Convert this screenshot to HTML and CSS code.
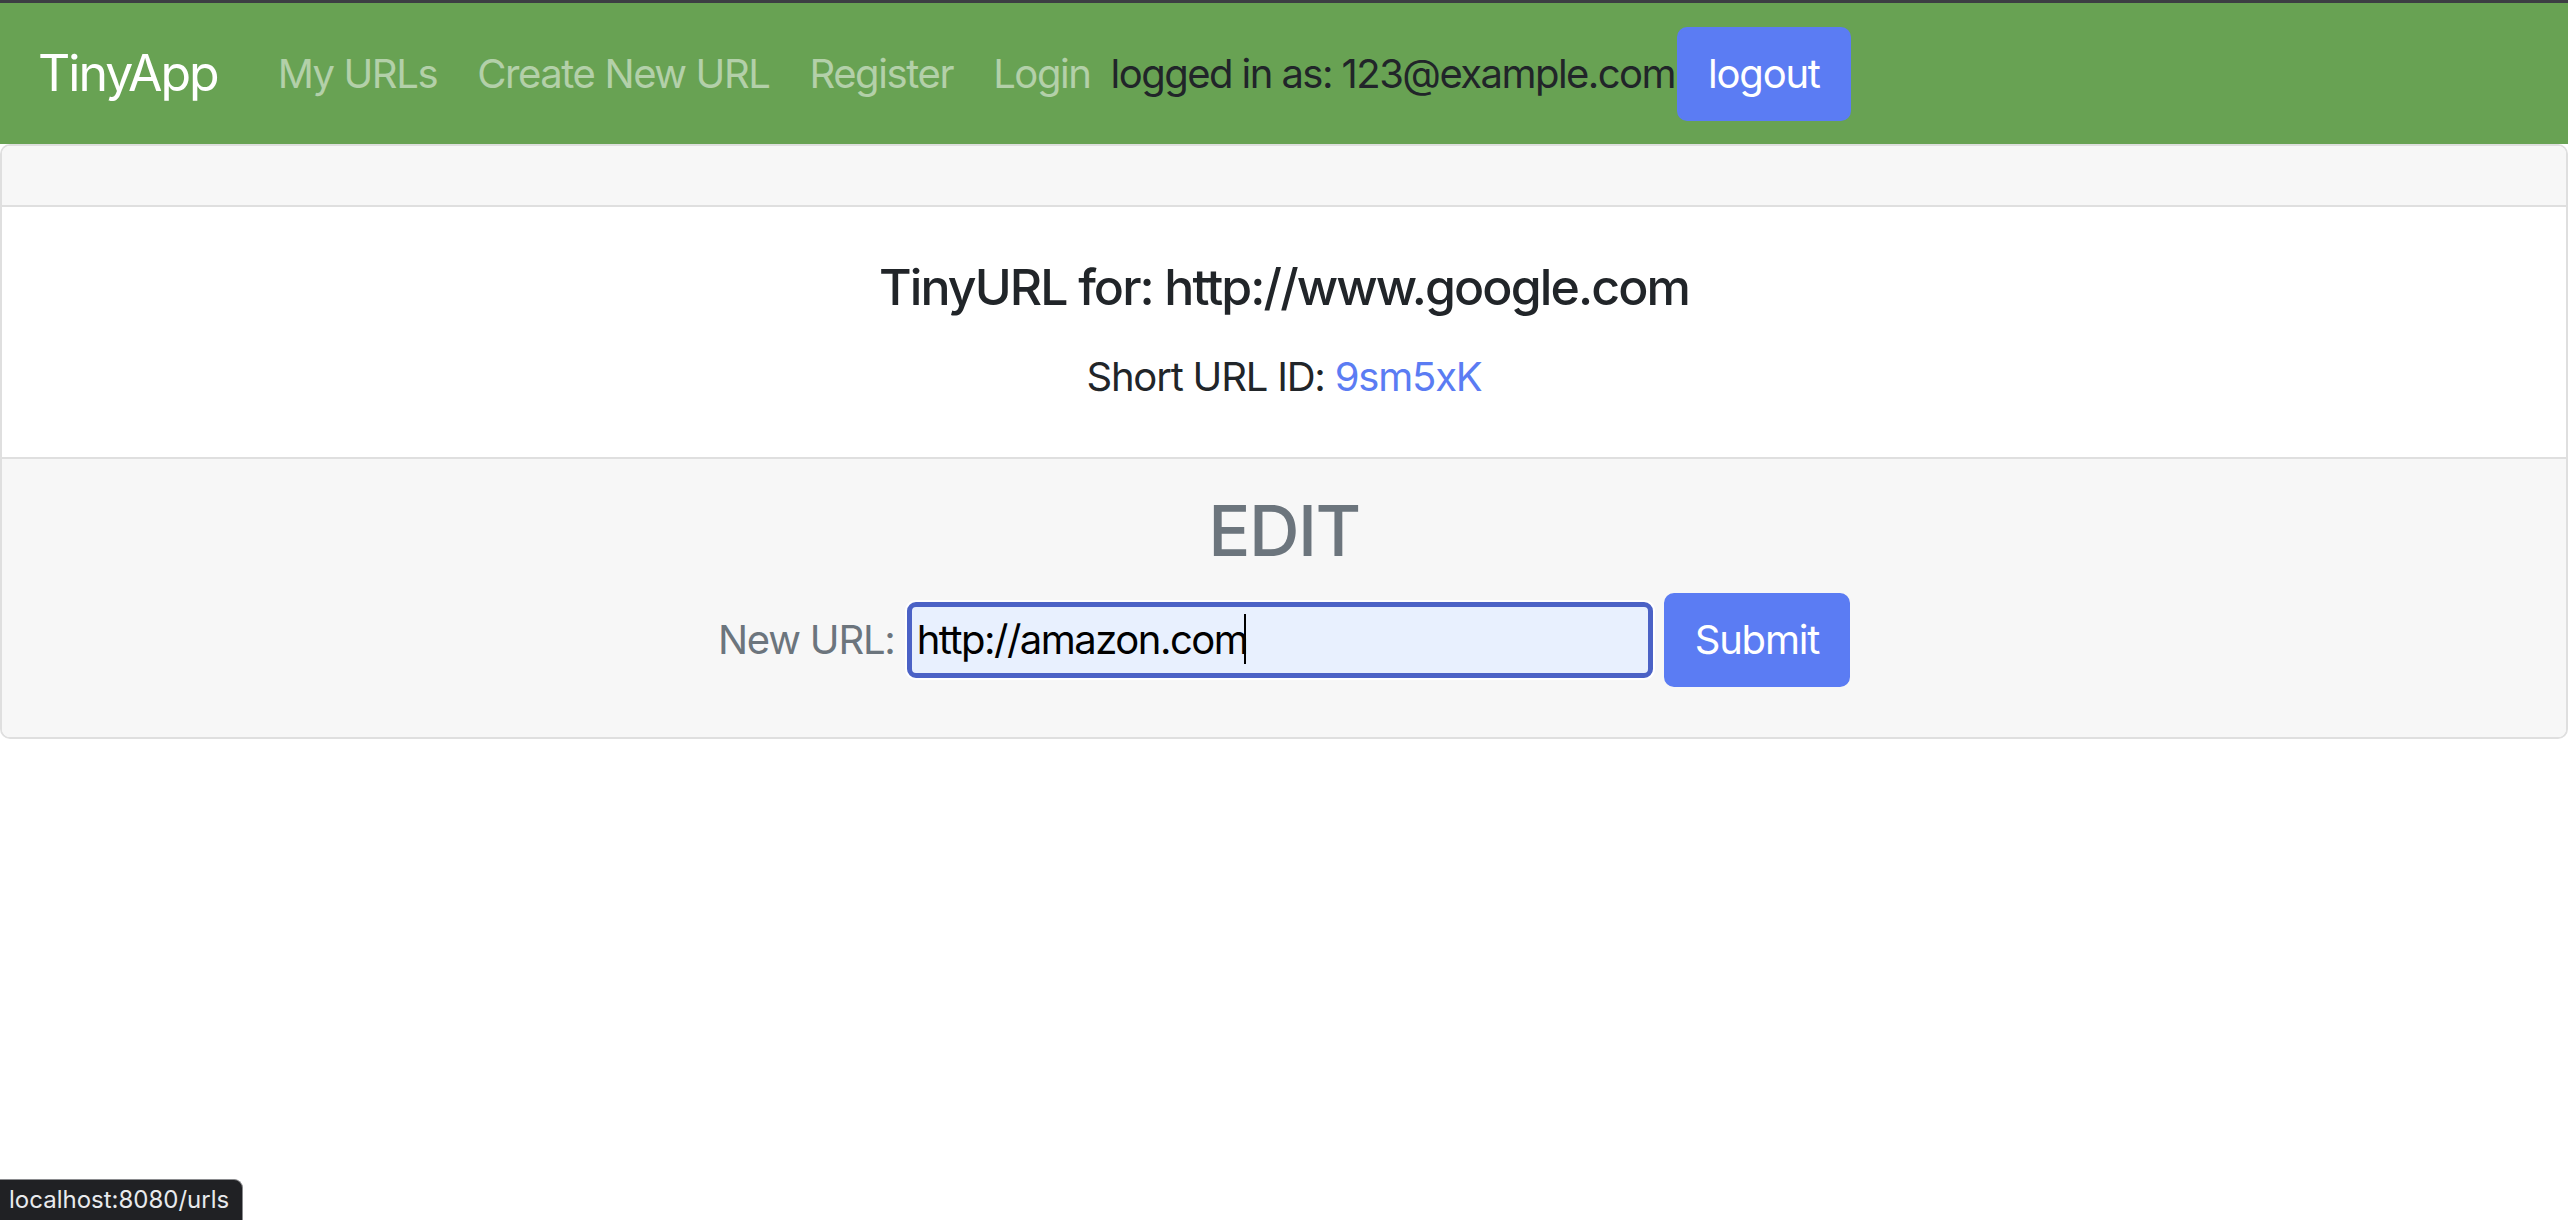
FILE: index.html
```html
<!DOCTYPE html>
<html lang="en">
<head>
<meta charset="utf-8">
<title>TinyApp</title>
<link rel="stylesheet" href="styles.css">
</head>
<body>
<nav class="navbar">
  <a class="brand" href="#">TinyApp</a>
  <div class="nav-links">
    <a class="nav-link" href="#">My URLs</a>
    <a class="nav-link" href="#">Create New URL</a>
    <a class="nav-link" href="#">Register</a>
    <a class="nav-link" href="#">Login</a>
  </div>
  <span class="logged">logged in as: 123@example.com</span>
  <button class="btn" type="button">logout</button>
</nav>
<main class="card">
  <div class="card-header"></div>
  <div class="card-body">
    <h5 class="card-title">TinyURL for: http://www.google.com</h5>
    <p class="card-text">Short URL ID: <a class="short-link" href="#">9sm5xK</a></p>
  </div>
  <div class="card-footer">
    <h3 class="edit-title">EDIT</h3>
    <form class="edit-form">
      <label class="edit-label" for="longURL">New URL:</label>
      <span class="input-wrap"><input class="url-input" id="longURL" type="text" value="http://amazon.com"><span class="caret"></span></span>
      <button class="btn btn-submit" type="button">Submit</button>
    </form>
  </div>
</main>
<div class="status-bubble">localhost:8080/urls</div>
</body>
</html>
```

FILE: styles.css
```css
* { box-sizing: border-box; }
html, body { margin: 0; padding: 0; }
body {
  font-family: Inter, "Noto Sans", "Liberation Sans", sans-serif;
  color: #212529;
  background: #ffffff;
  font-size: 40px;
  line-height: 1.5;
}
a { text-decoration: none; }

.navbar {
  display: flex;
  align-items: center;
  height: 144px;
  border-top: 3px solid #3c3e43;
  background: #68a253;
  padding: 0 40px 0 38px;
}
.brand {
  color: #ffffff;
  font-size: 50px;
  letter-spacing: -2px;
  margin-right: 40px;
  line-height: 75px;
}
.nav-links { display: flex; }
.nav-link {
  color: rgba(255, 255, 255, 0.5);
  padding: 0 20px;
  letter-spacing: -1.4px;
}
.logged {
  color: #212529;
  letter-spacing: -1.55px;
  margin-right: 2px;
}
.btn {
  font-family: inherit;
  font-size: 40px;
  line-height: 60px;
  color: #ffffff;
  background: #5b7cf3;
  border: 2px solid #5b7cf3;
  border-radius: 10px;
  padding: 15px 29px;
  height: 94px;
  letter-spacing: -1.2px;
  cursor: pointer;
}

.card {
  display: block;
  border: 2px solid #dfdfdf;
  border-radius: 10px;
  overflow: hidden;
}
.card-header {
  height: 61px;
  background: #f7f7f7;
  border-bottom: 2px solid #dfdfdf;
}
.card-body {
  padding: 50px;
  text-align: center;
  height: 250px;
}
.card-title {
  margin: 0 0 30px;
  font-size: 50px;
  font-weight: 500;
  line-height: 60px;
  letter-spacing: -1.9px;
}
.card-text {
  margin: 0;
  line-height: 60px;
  letter-spacing: -1.2px;
}
.short-link { color: #5b7cf3; }

.card-footer {
  background: #f7f7f7;
  border-top: 2px solid #dfdfdf;
  padding: 30px 50px 50px;
  text-align: center;
  color: #6c757d;
}
.edit-title {
  margin: 0 0 20px;
  font-size: 70px;
  font-weight: 500;
  line-height: 84px;
  letter-spacing: -1.5px;
}
.edit-form {
  display: flex;
  justify-content: center;
  align-items: baseline;
  gap: 11px;
}
.edit-label {
  letter-spacing: -1.2px;
  margin-right: 1px;
}
.input-wrap { position: relative; display: inline-block; }
.url-input {
  width: 746px;
  height: 76px;
  font-family: inherit;
  font-size: 40px;
  line-height: 60px;
  color: #000000;
  background: #e8f0fe;
  border: 5px solid #4b62c6;
  border-radius: 9px;
  box-shadow: 0 0 0 2px #ffffff;
  padding: 0 5px;
  letter-spacing: -1.5px;
  outline: none;
}
.caret {
  position: absolute;
  left: 337px;
  top: 12px;
  width: 2px;
  height: 50px;
  background: #000000;
}

.status-bubble {
  position: fixed;
  left: 0;
  bottom: 0;
  background: #202124;
  color: #e8eaed;
  font-size: 24px;
  line-height: 38px;
  padding: 1px 13px 1px 9px;
  border-top: 1px solid #8a8b8e;
  border-right: 1px solid #8a8b8e;
  border-top-right-radius: 9px;
}
```
